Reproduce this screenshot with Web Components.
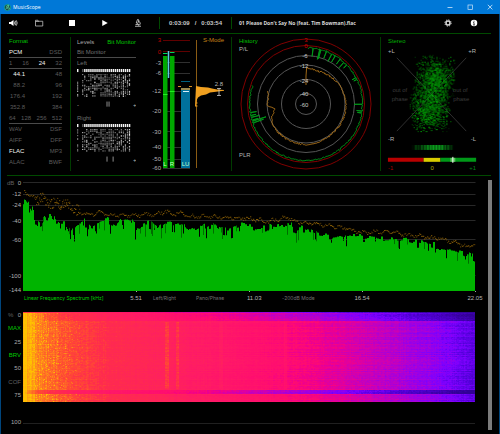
<!DOCTYPE html>
<html lang="en">
<head>
<meta charset="utf-8">
<title>MusicScope</title>
<style>
html,body{margin:0;background:#000}
body{font:6px/8px "Liberation Sans",Arial,sans-serif;color:#a8a8a8}
</style>
</head>
<body>
<music-scope></music-scope>
<script>
const BASE = `*{box-sizing:border-box}button{all:unset;box-sizing:border-box;cursor:pointer;white-space:nowrap}button:focus-visible{outline:1px solid #0a0}svg,canvas{display:block;width:100%;height:auto}svg text{font-size:6px;fill:#b4b4b4}`;
function define(name, css, html, ready) {
  const tpl = document.createElement('template');
  tpl.innerHTML = `<style>${BASE}${css}</style>${html}`;
  customElements.define(name, class extends HTMLElement {
    constructor() {
      super();
      this.attachShadow({mode: 'open'}).append(tpl.content.cloneNode(true));
    }
    connectedCallback() { if (ready) ready(this.shadowRoot, this); }
  });
}
function random(seed) {
  return () => {
    seed = (seed + 0x6D2B79F5) | 0;
    let t = Math.imul(seed ^ (seed >>> 15), 1 | seed);
    t = (t + Math.imul(t ^ (t >>> 7), 61 | t)) ^ t;
    return ((t ^ (t >>> 14)) >>> 0) / 4294967296;
  };
}
function curve(points, x) {
  for (let i = 1; i < points.length; i++) {
    if (x <= points[i][0]) {
      const [a, b] = points[i - 1], [c, d] = points[i];
      return b + (d - b) * (x - a) / (c - a);
    }
  }
  return points[points.length - 1][1];
}

define('title-bar', `
:host{display:flex;height:14px;background:#0078d7;color:#fff;align-items:center;font-family:"Open Sans","Noto Sans",sans-serif;font-size:5px}
.logo{width:7px;margin:0 2px 0 4px}
.name{flex:1}
button{width:20px;height:14px;display:grid;place-items:center}
button svg{width:6px;height:6px}`, `
<svg class="logo" viewBox="0 0 14 14"><circle cx="7" cy="7" r="6.6" fill="#13a585"/><circle cx="7" cy="7" r="5.3" fill="#184a4d"/><path d="M3 11 6 7V3l3-1v4l3 5M5 5l4 6" fill="none" stroke="#5ee0a4" stroke-width="1.4"/></svg>
<span class="name"><slot></slot></span>
<button aria-label="Minimize"><svg viewBox="0 0 6 6"><path d="M.5 3.500h5" stroke="#cfe6fa" stroke-width=".8"/></svg></button>
<button aria-label="Maximize"><svg viewBox="0 0 6 6"><rect x="1" y="1" width="4.500" height="4.500" fill="none" stroke="#cfe6fa" stroke-width=".7"/></svg></button>
<button aria-label="Close"><svg viewBox="0 0 6 6"><path d="m.8.8 4.600 4.600m0-4.600L.8 5.400" stroke="#dcedfb" stroke-width=".8"/></svg></button>`);

define('tool-bar', `
:host{display:flex;align-items:center;height:20px;margin:0 8px 0 6px;padding:0 12px 1px 1px;border-bottom:1px solid #004a00;color:#e4e4e4}
button{width:10px;height:10px}
.play{display:flex;gap:23px;margin:0 16px}
.rule{width:1px;height:12px;background:#004a00}
.time{width:71px;display:flex;justify-content:center;gap:5px;font-weight:bold;color:#c8c8c8}
.track{flex:1;min-width:0;padding-left:7px;font-size:5px;font-weight:bold;color:#d8d8d8;white-space:nowrap;overflow:hidden;font-family:"Open Sans","Noto Sans",sans-serif}
.end{display:flex;gap:16px}`, `
<button aria-label="Volume"><svg viewBox="0 0 20 20" fill="none" stroke="#e8e8e8" stroke-width="1.400"><path d="M2 8h3.500L11 4v12l-5.500-4H2z" fill="#fff" stroke="none"/><path d="M12.500 7q2 3 0 6M14.500 5.500q3 4.500 0 9M16.500 4.500q4 5.500 0 11"/></svg></button>
<div class="play">
<button aria-label="Open"><svg viewBox="0 0 20 20"><path d="M3 16V4.500h5l1.500 2H17.500V16zM3 7h7" fill="none" stroke="#c8c8c8" stroke-width="1.500"/></svg></button>
<button aria-label="Stop"><svg viewBox="0 0 20 20"><path d="M4 4h12v12H4z" fill="#fff"/></svg></button>
<button aria-label="Play"><svg viewBox="0 0 20 20"><path d="m4.500 4 11 6-11 6z" fill="#fff"/></svg></button>
<button aria-label="Analyze"><svg viewBox="0 0 20 20" fill="none" stroke="#d8d8d8" stroke-width="1.600"><path d="m9 3 3 1-2.500 7-3-1zM10.500 6q5 2 4 6-.8 2-4 3M5 13h7M4 16.500h12"/></svg></button>
</div>
<div class="rule"></div>
<div class="time"><span>0:03:09</span><span>/</span><span>0:03:54</span></div>
<div class="rule"></div>
<div class="track"><slot></slot></div>
<div class="end">
<button aria-label="Settings"><svg viewBox="0 0 20 20" fill="none" stroke="#d8d8d8"><circle cx="10" cy="10" r="4" stroke-width="3"/><circle cx="10" cy="10" r="6.300" stroke-width="2" stroke-dasharray="2.500 2.450"/></svg></button>
<button aria-label="Information"><svg viewBox="0 0 20 20"><circle cx="10" cy="10" r="6.500" fill="#fff"/><path d="M10 5.500v2M8.500 9H10v5M8.500 14h3" fill="none" stroke="#111" stroke-width="1.600"/></svg></button>
</div>`);

define('format-panel', `
:host{display:block;padding:0 8px 0 2px;color:#5c5c5c;border-right:1px solid #003c00;margin:3px 0 4px}
h2{margin:0;font-size:6px;font-weight:normal;line-height:9px;height:10px;color:#00c000}
.row{display:flex;justify-content:space-between;height:11px;line-height:11px}
.line{border-bottom:1px solid #4a4a4a}
.rate span:first-child{width:16px;text-align:right}
b{color:#f4f4f4;font-weight:normal}`, `
<h2>Format</h2>
<div class="row line"><b>PCM</b><span>DSD</span></div>
<div class="row line"><span>1</span><span>16</span><b>24</b><span>32</span></div>
<div class="row rate"><span><b>44.1</b></span><span>48</span></div>
<div class="row rate"><span>88.2</span><span>96</span></div>
<div class="row rate"><span>176.4</span><span>192</span></div>
<div class="row rate"><span>352.8</span><span>384</span></div>
<div class="row line"><span>64</span><span>128</span><span>256</span><span>512</span></div>
<div class="row"><span>WAV</span><span>DSF</span></div>
<div class="row"><span>AIFF</span><span>DFF</span></div>
<div class="row"><b>FLAC</b><span>MP3</span></div>
<div class="row"><span>ALAC</span><span>BWF</span></div>`);

define('bit-channel', `
:host{display:block;height:55px}
.name{line-height:11px;height:11px;color:#707070}`, `
<div class="name"><slot></slot></div>
<svg viewBox="0 0 58 39"><g class="bits"></g><g class="marks" fill="#8a8a8a"></g><text x="0" y="37">-</text><text x="55" y="37">+</text></svg>`,
(root, host) => {
  const rnd = random(+host.getAttribute('seed'));
  let out = '';
  for (let c = 0; c < 25; c++) {
    const x = c === 0 ? 0 : 3 + c * 2;
    const base = 60 + rnd() * 80;
    out += `<rect x="${x}" y="0" width="1.400" height="3" fill="${c === 1 ? '#555' : '#f4f4f4'}"/>`;
    const density = c < 3 ? .5 : c < 10 ? .55 : .72;
    for (let r = 0; r < 15; r++) {
      if (rnd() < density) {
        const g = Math.floor(base + rnd() * 95);
        out += `<rect x="${x}" y="${5 + r * 1.5}" width="1.200" height="${rnd() < .3 ? 1.5 : 1}" fill="rgb(${g},${g},${g})"/>`;
      }
    }
  }
  root.querySelector('.bits').innerHTML = out;
  root.querySelector('.marks').innerHTML = host.getAttribute('marks').split(',').map(x => `<rect x="${x}" y="32" width="1" height="5"/>`).join('');
});

define('bit-panel', `
:host{display:block;padding:3px 15px 0 6px}
.tabs{display:flex;justify-content:space-between;line-height:9px;height:10px}
.on{color:#00c400}
.mode{height:11px;line-height:11px;border-bottom:1px solid #4a4a4a;color:#707070}`, `
<div class="tabs"><button>Levels</button><button class="on">Bit Monitor</button></div>
<div class="mode">Bit Monitor</div>
<bit-channel seed="11" marks="29,31">Left</bit-channel>
<bit-channel seed="29" marks="29,35">Right</bit-channel>`);

define('level-meter', `
:host{display:block}
.r{text-anchor:end}.red text{fill:#c00000}.bar text{fill:#c8ffc8;text-anchor:middle}`, `
<svg viewBox="151 34 80 141" role="img" aria-label="Level meter">
<g stroke="#303030"><path d="M163 62.500h27m-27 11h27m-27 18h27m-27 20h27m-27 20h27m-27 16h27m-27 12h27m-27 9h27"/></g>
<path d="M163 40.500h27m-27 11h27" stroke="#600000"/>
<g class="r red"><text x="161" y="42">3</text><text x="161" y="54">0</text></g>
<g class="r"><text x="161" y="65">-3</text><text x="161" y="75">-6</text><text x="161" y="93">-12</text><text x="161" y="113">-20</text><text x="161" y="134">-30</text><text x="161" y="149">-40</text><text x="161" y="161">-50</text><text x="161" y="170">-60</text></g>
<path d="M163 56h4.500v112H163zM170 56h4.500v112H170z" fill="#00a800"/>
<path d="M163 53.500h4.500M170 52.500h4.500" stroke="#00d860"/>
<path d="M163 94.500h4.500M170 91.500h4.500" stroke="#20f020"/>
<path d="M168.500 51v27" stroke="#5cc8e0" stroke-width="1.500"/>
<path d="M181 90h9v78h-9z" fill="#00719c"/><path d="M181 88h9v2h-9z" fill="#9a8a50"/>
<path d="M183 91.500h6" stroke="#d8eef8"/><path d="M181 81.500h9" stroke="#006080"/>
<path d="M178 86.500h3m8 0h3" stroke="#d89020"/>
<g class="bar"><text x="165" y="166">L</text><text x="172" y="166">R</text><text x="185.500" y="166">LU</text></g>
<path d="M196.500 40v128" stroke="#8a5c14"/>
<text x="224" y="42" class="r" style="fill:#c88418">S-Mode</text>
<path d="M196 86l5 1 7 .5 4 1 5 1 7 .5v.8l-6 .7-8 1-4 2-5 1-3 2-1 2-1 5v2h-1z" fill="#f0a020"/>
<path d="M196 103h1.500m-1.500 3h1.500" stroke="#f0a020"/>
<text x="223" y="86" class="r">2.8</text>
<path d="M217 88.500h4m-2 0v7m-2 0h4" fill="none" stroke="#ccc" stroke-width=".8"/>
</svg>`);

define('history-dial', `
:host{display:block;border:solid #003c00;border-width:0 1px;margin:3px 0 4px}
.m{text-anchor:middle}.m text{fill:#c8c8c8}`, `
<svg viewBox="232 37 148 134" role="img" aria-label="History">
<g fill="none" stroke="#565656"><circle cx="306" cy="104" r="48.500"/><circle cx="306" cy="104" r="39"/><circle cx="306" cy="104" r="24.500"/><circle cx="306" cy="104" r="10.500"/></g>
<g fill="none" stroke="#800000"><circle cx="306" cy="104" r="65"/><circle cx="306" cy="104" r="58.500"/></g>
<path class="g" fill="none" stroke="#009818" stroke-width=".9"/><path class="o" fill="none" stroke="#b07418" stroke-width=".9"/>
<text x="239" y="43" style="fill:#00c000">History</text><text x="239" y="51">P/L</text><text x="239" y="157">PLR</text>
<g class="m"><text x="306" y="42" style="fill:#c80000">3</text><text x="306" y="48" style="fill:#c80000">0</text><text x="305" y="58">-6</text><text x="304" y="68">-12</text><text x="304" y="83">-24</text><text x="304" y="96">-40</text><text x="304" y="107">-60</text></g>
</svg>`,
root => {
  const rnd = random(7);
  const at = (deg, r) => {
    const a = deg * Math.PI / 180;
    return `${(306 + r * Math.sin(a)).toFixed(1)} ${(104 - r * Math.cos(a)).toFixed(1)}`;
  };
  const dips = {7: 48, 14: 46, 15: 47, 21: 49, 27: 48, 31: 49, 37: 50, 42: 49, 46: 52, 62: 52, 64: 53, 90: 48, 97: 51, 99: 52, 250: 45, 252: 42, 253: 50, 256: 48, 258: 51, 261: 50};
  const green = [];
  for (let d = 2; d <= 289; d++) {
    green.push(at(d, 56 + rnd() * 1.4 - .3));
    if (dips[d]) green.push(at(d + .3, dips[d]), at(d + .5, 56));
  }
  root.querySelector('.g').setAttribute('d', 'M' + green.join('L'));
  const shape = [[1, 36], [20, 35], [45, 37], [65, 38.5], [90, 40], [110, 40], [140, 39.5], [180, 40.5], [215, 40], [240, 39], [249, 37], [256, 33], [262, 31], [267, 39], [280, 38.5], [289, 40]];
  const orange = [at(0, 19), at(0, 28), at(1, 36)];
  for (let d = 2; d <= 289; d += 1.5) orange.push(at(d, curve(shape, d) + rnd() * 1.6 - .8));
  root.querySelector('.o').setAttribute('d', 'M' + orange.join('L'));
});

define('stereo-scope', `
:host{display:block}
.dim{text-anchor:middle}.dim text{fill:#3c3c3c}.e{text-anchor:end}`, `
<svg viewBox="381 34 111 141" role="img" aria-label="Stereo image">
<path d="m397 58 70 74m0-74-70 74" stroke="#303030"/>
<g class="dim"><text x="400" y="93">out of</text><text x="400" y="102">phase</text><text x="461" y="93">out of</text><text x="462" y="102">phase</text></g>
<g class="cloud"></g><g class="ticks"></g>
<text x="388" y="43" style="fill:#00b000">Stereo</text>
<text x="388" y="53">+L</text><text x="477" y="53" class="e">+R</text><text x="388" y="142">-R</text><text x="477" y="142" class="e">-L</text>
<path d="M388 159h36v4h-36z" fill="#b80000"/><path d="M424 159h17v4h-17z" fill="#d8cc00"/><path d="M441 159h36v4h-36z" fill="#009818"/>
<path d="M451 159h5v4h-5z" fill="#60c060"/><path d="M453.500 158v6" stroke="#fff"/>
<text x="388" y="171" style="fill:#b00000">-1</text><text x="431" y="171" style="fill:#b8b000">0</text><text x="477" y="171" class="e" style="fill:#008818">+1</text>
</svg>`,
root => {
  const rnd = random(42);
  const bell = () => rnd() + rnd() - 1;
  let out = '';
  for (let i = 0; i < 2300; i++) {
    const top = rnd() < .5;
    const x = (top ? 435 : 430) + bell() * 21;
    const y = (top ? 79 : 109) + bell() * 25;
    out += `<rect x="${Math.round(x)}" y="${Math.round(y)}" width="1" height="1" fill="rgb(0,${110 + Math.floor(rnd() * 110)},${Math.floor(rnd() * 20)})" opacity="${(.3 + rnd() * .5).toFixed(2)}"/>`;
  }
  root.querySelector('.cloud').innerHTML = out;
  let bars = '';
  for (let x = 412; x < 454; x++) {
    const near = 1.2 - Math.abs(x - 435) / 22;
    bars += `<rect x="${x}" y="146" width="1" height="5" fill="#10d828" opacity="${Math.min(1, Math.max(.05, near * (x % 3 ? 1 : .4) - rnd() * .3)).toFixed(2)}"/>`;
  }
  root.querySelector('.ticks').innerHTML = bars;
});

define('frequency-spectrum', `
:host{display:block}
.r{text-anchor:end}
.legend{display:grid;grid-template-columns:minmax(0,22fr) minmax(0,452fr) minmax(0,11fr);height:12px}
.axis{grid-column:2;display:grid;grid-template-columns:repeat(4,minmax(0,1fr))}
.cell{display:flex;align-items:center;gap:20px;line-height:11px;color:#707070}
.cell button{font:5px/11px Inter,"Liberation Sans",sans-serif}
.cell button:first-child{margin-left:1px}
.cell.b button:first-child{margin-left:17px}.cell.c button:first-child{margin-left:33px}
.cell .on{color:#00d000}
.tick{margin-left:auto;width:20px;margin-right:-10px;text-align:center;color:#b4b4b4;flex:none}`, `
<svg viewBox="1 176 485 116" role="img" aria-label="Frequency spectrum">
<path d="M23 182.500h452.500m-452.500 12h452.500m-452.500 11h452.500m-452.500 15h452.500m-452.500 19h452.500m-452.500 36h452.500" stroke="#282828"/>
<path class="fill" fill="#00b400"/><path class="dark" stroke="#006c00" fill="none"/><g class="peak"></g>
<path d="M136.500 291v1.500m113-1.500v1.500m113-1.500v1.500m113-1.500v1.500" stroke="#aaa"/>
<text x="7" y="185" style="fill:#606060">dB</text>
<g class="r"><text x="21" y="185">0</text><text x="21" y="196">-12</text><text x="21" y="207">-24</text><text x="21" y="223">-40</text><text x="21" y="242">-60</text><text x="21" y="278">-100</text><text x="21" y="292">-144</text></g>
</svg>
<div class="legend"><div class="axis">
<div class="cell"><button class="on">Linear Frequency Spectrum [kHz]</button><span class="tick">5.51</span></div>
<div class="cell b"><button>Left/Right</button><button>Pano/Phase</button><span class="tick">11.03</span></div>
<div class="cell c"><button>-200dB Mode</button><span class="tick">16.54</span></div>
<div class="cell"><span class="tick">22.05</span></div>
</div></div>`,
root => {
  const rnd = random(5);
  const top = [[23, 208], [24, 198], [26, 199], [28, 203], [29, 199], [31, 210], [33, 202], [34, 214], [35, 222], [38, 223], [39, 213], [40, 222], [42, 222], [44, 211], [47, 220], [50, 211], [53, 220], [55, 213], [57, 222], [60, 218], [66, 218], [71, 229], [76, 220], [82, 218], [86, 214], [92, 220], [100, 217], [108, 216], [116, 221], [122, 215], [133, 218], [138, 222], [150, 218], [157, 224], [165, 218], [182, 218], [190, 227], [197, 225], [212, 218], [220, 225], [230, 226], [240, 222], [252, 222], [262, 224], [280, 221], [288, 222], [305, 224], [318, 229], [330, 230], [345, 231], [357, 231], [375, 232], [400, 235], [420, 236], [432, 241], [450, 245], [463, 246], [475, 251]];
  let path = 'M23 291', dark = '';
  let level = 0;
  for (let x = 23; x < 475; x += 1) {
    if (x % 2) level = rnd() < .35 ? rnd() * 13 : level * .5 + rnd() * 4;
    let y = curve(top, x + .5) + level * (x < 60 ? .4 : 1);
    if (rnd() < .08) dark += `M${x + .5} ${y.toFixed(1)}v${(4 + rnd() * 10).toFixed(1)}`;
    if (rnd() < .07) y += 3 + rnd() * 8;
    path += `V${y.toFixed(1)}h1`;
  }
  root.querySelector('.fill').setAttribute('d', path + 'V291z');
  root.querySelector('.dark').setAttribute('d', dark);
  const mean = [[24, 188], [27, 194], [33, 197], [40, 199], [50, 202], [70, 206], [78, 212], [90, 214], [100, 212], [115, 215], [130, 215], [155, 214], [165, 211], [172, 214], [180, 212], [190, 216], [225, 217], [250, 218], [268, 221], [285, 217], [300, 222], [320, 224], [340, 227], [360, 232], [385, 231], [410, 235], [440, 238], [455, 242], [465, 246], [475, 244]];
  let dots = '';
  for (let x = 24; x < 475; x++) {
    const wide = x > 34 && x < 80;
    const spread = wide ? 12 : 3;
    for (let k = 0; k < (wide ? 2 : 1); k++) {
      const y = curve(mean, x) + Math.sin(x * .55) * 1.2 + (rnd() - .5) * spread;
      dots += `<rect x="${x}" y="${y.toFixed(1)}" width="1.300" height="1" fill="#a87408" opacity="${(.4 + rnd() * .4).toFixed(2)}"/>`;
    }
  }
  root.querySelector('.peak').innerHTML = dots;
});

define('spectro-gram', `
:host{display:grid;grid-template-columns:minmax(0,22fr) minmax(0,452fr) minmax(0,11fr);padding:4px 0 5px;flex:1}
.scale{display:grid;grid-template-rows:repeat(9,1fr);align-items:center;text-align:right;padding-right:2px;min-height:120px}
.first{display:flex;justify-content:space-between;padding-left:7px}
.unit,.scale .off{color:#606060}.scale .on{color:#00c800}
.last{grid-row:9}
.plot{padding-top:4px;display:flex;flex-direction:column;justify-content:space-between;padding-bottom:5px}
.base{height:1px;background:#202020}`, `
<div class="scale"><span class="first"><span class="unit">%</span><span>0</span></span><button class="on">MAX</button><span>25</span><button class="on">BRV</button><span>50</span><button class="off">COF</button><span>75</span><span class="last">100</span></div>
<div class="plot"><canvas width="452" height="90"></canvas><div class="base"></div></div>`,
root => {
  const ctx = root.querySelector('canvas').getContext('2d');
  const W = 452, H = 90, img = ctx.createImageData(W, H), rnd = random(3);
  const stops = [
    [0, 255, 195, 0], [.02, 255, 155, 20], [.05, 255, 115, 35], [.1, 255, 75, 50], [.18, 255, 45, 75], [.38, 255, 28, 100], [.58, 255, 12, 112],
    [.66, 240, 0, 140], [.76, 205, 0, 180], [.86, 165, 0, 220], [.96, 125, 0, 255], [1.06, 85, 0, 220], [1.25, 50, 0, 150]];
  const ch = [1, 2, 3].map(k => stops.map(s => [s[0], s[k]]));
  const cols = Array.from({length: W}, () => (rnd() - .5) * .035);
  const rows = Array.from({length: H}, () => (rnd() - .5) * .08);
  for (let y = 0; y < H; y++) {
    let cell = 0;
    for (let x = 0; x < W; x++) {
      const t = x / W;
      if (x % 2 === 0 || rnd() < .3) cell = (rnd() - .5) * .065;
      let v = t + cols[x] + rows[y] * Math.min(1, t * 2 + .1) + cell * Math.min(1, t * 8 + .1);
      if (y < 9 && x > 20) v += .18 * Math.min(1, t * 3);
      if (y < 1) v += .15;
      if (t > .9) v += (t - .9) * .5;
      if (y > 77 && y < 82) v += .24 * Math.min(1, t * 8);
      if (y > 9 && y < 77 && ((x > 141 && x < 146) || (x > 152 && x < 156))) v -= .17;
      if (y > 9 && y < 77 && ((x > 195 && x < 200) || (x > 260 && x < 264))) v -= .06;
      if (x > 5 && x < 60 && rnd() < .1) v -= .04;
      v = Math.max(0, v);
      const i = (y * W + x) * 4;
      for (let k = 0; k < 3; k++) img.data[i + k] = curve(ch[k], v);
      img.data[i + 3] = 255;
    }
  }
  ctx.putImageData(img, 0, 0);
});

define('music-scope', `
:host{display:flex;flex-direction:column;min-height:100vh;background:#000;border:solid #00457c;border-width:0 1px 1px}
title-bar{margin:0 -1px}
.panels{display:grid;grid-template-columns:minmax(0,64fr) minmax(0,80fr) minmax(0,80fr) minmax(0,150fr) minmax(0,110fr);margin:0 8px 0 6px;border-bottom:1px solid #004a00}
.charts{display:flex;flex:1;padding-right:7px;gap:2px}
.stack{flex:1;min-width:0;display:flex;flex-direction:column}
.scroll{width:4px;margin:4px 0;background:#7c7c7c}`, `
<title-bar>MusicScope</title-bar>
<tool-bar>01 Please Don't Say No (feat. Tim Bowman).flac</tool-bar>
<div class="panels"><format-panel></format-panel><bit-panel></bit-panel><level-meter></level-meter><history-dial></history-dial><stereo-scope></stereo-scope></div>
<div class="charts"><div class="stack" id="charts"><frequency-spectrum></frequency-spectrum><spectro-gram></spectro-gram></div><div class="scroll" role="scrollbar" aria-label="Scroll" aria-valuenow="0" aria-controls="charts"></div></div>`);
</script>
</body>
</html>
